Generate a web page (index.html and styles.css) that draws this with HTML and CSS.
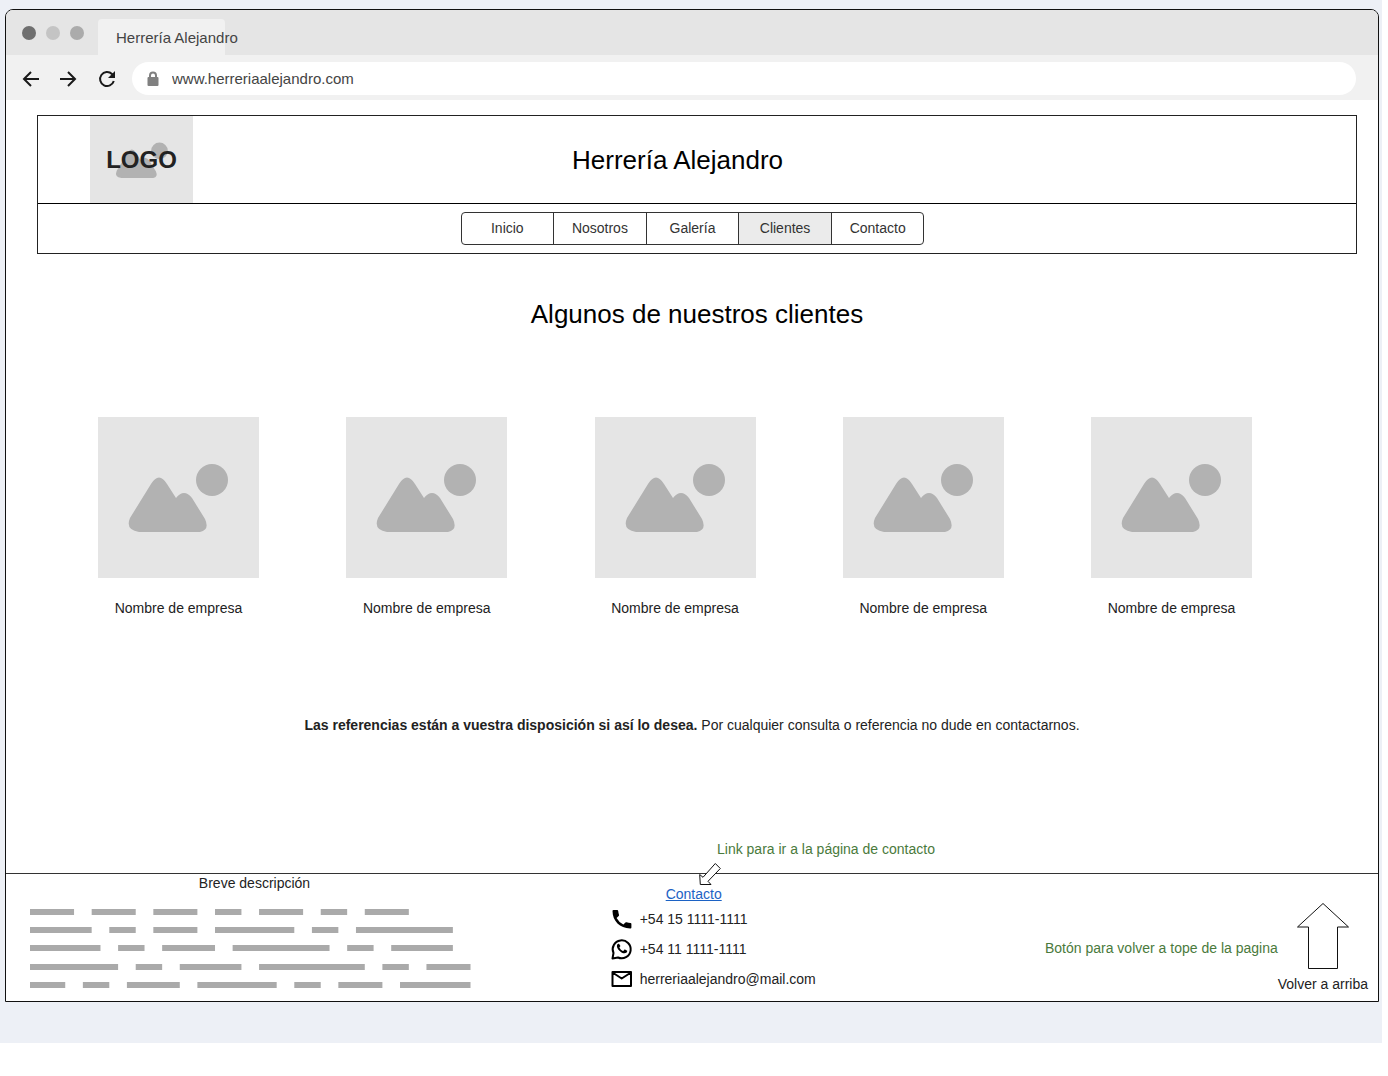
FILE: index.html
```html
<!DOCTYPE html>
<html lang="es">
<head>
  <meta charset="utf-8">
  <meta name="viewport" content="width=device-width, initial-scale=1">
  <title>Herrería Alejandro</title>
  <link rel="stylesheet" href="styles.css">
</head>
<body>
  <svg class="defs" aria-hidden="true">
    <symbol id="placeholder" viewBox="0 0 161 161">
      <path d="M32 101L53 67Q61 54 69 67L78 81Q86 71 94 81L107 102Q112 113 102 115H41Q27 113 32 101Z" />
      <circle cx="114" cy="63" r="16" />
    </symbol>
  </svg>
  <div class="canvas">
    <div class="window">
      <div class="tabs">
        <span class="dot dot-dark"></span>
        <span class="dot dot-light"></span>
        <span class="dot dot-mid"></span>
        <button class="tab" type="button">Herrería Alejandro</button>
      </div>
      <div class="toolbar">
        <button class="tool" type="button" aria-label="Atrás">
          <svg width="18" height="18" viewBox="0 0 18 18"><path d="M17 9H2M9 2L2 9l7 7" /></svg>
        </button>
        <button class="tool" type="button" aria-label="Adelante">
          <svg width="18" height="18" viewBox="0 0 18 18"><path d="M0 9h15M8 2l7 7-7 7" /></svg>
        </button>
        <button class="tool" type="button" aria-label="Recargar">
          <svg width="18" height="18" viewBox="0 0 18 18"><path d="M15.800 11A7 7 0 1 1 14 4l2 2" /><path class="solid" d="M17 1v7h-7z" /></svg>
        </button>
        <div class="address">
          <svg width="12" height="16" viewBox="0 0 12 16"><path class="shackle" d="M3 7V4.500a3 3 0 0 1 6 0V7" /><rect x="0.500" y="6" width="11" height="9" rx="1" /></svg>
          <input type="text" aria-label="Dirección" value="www.herreriaalejandro.com">
        </div>
      </div>

      <header class="site-header">
        <div class="brand">
          <div class="logo">
            <svg width="84" height="84"><use href="#placeholder" /></svg>
            <strong>LOGO</strong>
          </div>
          <h1>Herrería Alejandro</h1>
        </div>
        <nav class="menu">
          <div class="menu-group">
            <a href="#">Inicio</a>
            <a href="#">Nosotros</a>
            <a href="#">Galería</a>
            <a href="#" class="active" aria-current="page">Clientes</a>
            <a href="#">Contacto</a>
          </div>
        </nav>
      </header>

      <main>
        <h2>Algunos de nuestros clientes</h2>
        <div class="clients">
          <figure><svg width="161" height="161"><use href="#placeholder" /></svg><figcaption>Nombre de empresa</figcaption></figure>
          <figure><svg width="161" height="161"><use href="#placeholder" /></svg><figcaption>Nombre de empresa</figcaption></figure>
          <figure><svg width="161" height="161"><use href="#placeholder" /></svg><figcaption>Nombre de empresa</figcaption></figure>
          <figure><svg width="161" height="161"><use href="#placeholder" /></svg><figcaption>Nombre de empresa</figcaption></figure>
          <figure><svg width="161" height="161"><use href="#placeholder" /></svg><figcaption>Nombre de empresa</figcaption></figure>
        </div>
        <p class="references"><strong>Las referencias están a vuestra disposición si así lo desea.</strong> Por cualquier consulta o referencia no dude en contactarnos.</p>
        <p class="note link-note">Link para ir a la página de contacto</p>
      </main>

      <footer>
        <section class="about">
          <p>Breve descripción</p>
          <svg class="lines" width="442" height="80" viewBox="0 0 442 80" aria-hidden="true">
            <g transform="scale(8.810 1)">
              <path d="M0 3h5m2 0h5m2 0h5m2 0h3m2 0h5m2 0h3m2 0h5" />
              <path d="M0 21h7m2 0h3m2 0h5m2 0h9m2 0h3m2 0h11" />
              <path d="M0 39h8m2 0h3m2 0h6m2 0h11m2 0h3m2 0h7" />
              <path d="M0 58h10m2 0h3m2 0h7m2 0h12m2 0h3m2 0h5" />
              <path d="M0 76h4m2 0h3m2 0h6m2 0h9m2 0h3m2 0h5m2 0h8" />
            </g>
          </svg>
        </section>

        <section class="contact">
          <a class="contact-link" href="#">Contacto<svg class="pointer" width="24" height="24" viewBox="0 0 24 24" aria-hidden="true"><path d="M17.300 1.500L22.300 6.500L10 19.300L13 22.500H2.300L1.700 12.500L5 15.300Z" /></svg></a>
          <ul>
            <li>
              <svg width="24" height="24" viewBox="0 0 24 24"><path d="M3.500 3h3.700q.9 0 1 .9.200 2 .8 3.900.2.700-.3 1.200L6.600 11a15.500 15.500 0 0 0 6.800 6.600l2-2q.5-.5 1.200-.3 1.900.5 3.900.7.900.1.900 1V20.500q0 .9-1 .9C10 21.500 2.500 14 2.500 4q0-1 1-1z" /></svg>
              +54 15 1111-1111
            </li>
            <li>
              <svg width="24" height="24" viewBox="0 0 24 24"><path class="outline" d="M2.500 21.500l1-5.500A9 9 0 1 1 8 20.500z" /><path d="M9.300 7.300c-.300-.600-.500-.500-.900-.500-.500 0-1.500.800-1.500 2.100 0 3 4.300 7.400 7.600 7.400 1.500 0 2.600-.900 2.700-2 .1-.500 0-.600-.400-.800l-1.800-.9c-.300-.1-.500-.1-.7.200l-.8 1c-.2.200-.4.200-.7.100a7 7 0 0 1-3.300-3.200c-.1-.2 0-.4.2-.6l.6-.8c.1-.2.1-.3 0-.5z" /></svg>
              +54 11 1111-1111
            </li>
            <li>
              <svg width="24" height="24" viewBox="0 0 24 24"><path class="outline" d="M2.500 5h18.500v14H2.500zM2.500 5.500l9.200 6 9.300-6" /></svg>
              herreriaalejandro@mail.com
            </li>
          </ul>
        </section>

        <section class="top">
          <p class="note">Botón para volver a tope de la pagina</p>
          <button class="to-top" type="button">
            <svg width="54" height="68" viewBox="0 0 54 68" aria-hidden="true"><path d="M27 1.500L52.500 25H41.500V66.500H12.500V25H1.500Z" /></svg>
            Volver a arriba
          </button>
        </section>
      </footer>
    </div>
  </div>
</body>
</html>
```

FILE: styles.css
```css
* {
  box-sizing: border-box;
}

body {
  margin: 0;
  background: #fff;
  color: #222;
  font: 14px/20px "Liberation Sans", Arial, sans-serif;
}

h1, h2, p, figure, ul {
  margin: 0;
  padding: 0;
}

h1, h2 {
  color: #000;
  font-size: 26px;
  font-weight: 400;
  line-height: 32px;
  text-align: center;
}

svg {
  display: block;
  flex: none;
}

button {
  border: 0;
  padding: 0;
  background: none;
  color: inherit;
  font: inherit;
}

.defs {
  position: absolute;
  width: 0;
  height: 0;
}

.canvas {
  margin-right: 6px;
  padding: 9px 3px 41px 5px;
  background: #edf0f6;
}

.window {
  overflow: hidden;
  border: 1px solid #111;
  border-radius: 8px 8px 0 0;
  background: #fff;
}

/* Browser chrome */
.tabs {
  display: flex;
  align-items: center;
  gap: 10px;
  height: 45px;
  padding-left: 16px;
  background: #e5e5e5;
}

.dot {
  width: 14px;
  height: 14px;
  border-radius: 50%;
}

.dot-dark { background: #6f6f6f; }
.dot-light { background: #c4c4c4; }
.dot-mid { background: #ababab; }

.tab {
  align-self: flex-end;
  width: 127px;
  height: 36px;
  margin-left: 4px;
  padding: 2px 0 0 18px;
  border-radius: 4px 4px 0 0;
  background: #f1f1f1;
  color: #444;
  font-size: 15px;
  text-align: left;
  white-space: nowrap;
}

.toolbar {
  display: flex;
  align-items: center;
  gap: 20px;
  height: 45px;
  padding: 2px 22px 0 16px;
  background: #f1f1f1;
}

.tool path {
  fill: none;
  stroke: #1a1a1a;
  stroke-width: 2;
}

.tool .solid {
  fill: #1a1a1a;
  stroke: none;
}

.address {
  display: flex;
  flex: 1;
  align-items: center;
  gap: 13px;
  height: 33px;
  margin-left: -4px;
  padding-left: 15px;
  border-radius: 17px;
  background: #fff;
}

.address svg { fill: #808080; }

.address .shackle {
  fill: none;
  stroke: #808080;
  stroke-width: 2;
}

.address input {
  flex: 1;
  border: 0;
  padding: 0;
  background: none;
  color: #444;
  font: inherit;
  font-size: 15px;
}

/* Site header */
.site-header {
  margin: 15px 21px 0 31px;
  border: 1px solid #222;
}

.brand {
  display: grid;
  grid-template-columns: 103px 1fr 103px;
  align-items: center;
  padding: 0 91px 0 52px;
  border-bottom: 1px solid #000;
}

.logo {
  display: grid;
  height: 87px;
  place-items: center;
  background: #e5e5e5;
}

.logo > * {
  grid-area: 1 / 1;
}

.logo svg {
  fill: #b2b2b2;
}

.logo strong {
  z-index: 1;
  font-size: 24px;
}

.menu {
  padding: 8px 10px 8px 0;
}

.menu-group {
  display: flex;
  width: 463px;
  margin: 0 auto;
}

.menu a {
  flex: 1;
  margin-right: -1px;
  border: 1px solid #333;
  padding: 6px 0;
  color: #333;
  line-height: 19px;
  text-align: center;
  text-decoration: none;
}

.menu a:first-child { border-radius: 4px 0 0 4px; }
.menu a:last-child { border-radius: 0 4px 4px 0; }
.menu .active { background: #ebebeb; }

/* Clients */
main h2 {
  margin-top: 44px;
  padding-left: 10px;
}

.clients {
  display: flex;
  justify-content: space-between;
  margin-top: 87px;
  padding: 0 126px 0 92px;
}

.clients svg {
  background: #e5e5e5;
  fill: #b2b2b2;
}

figcaption {
  margin-top: 20px;
  text-align: center;
}

.references {
  margin-top: 97px;
  text-align: center;
}

.note {
  color: #4a7a3c;
}

.link-note {
  margin: 104px 0 14px calc(50% + 25px);
}

/* Footer */
footer {
  display: grid;
  grid-template-columns: 44% 30% 1fr;
  border-top: 1px solid #333;
}

.about {
  padding-left: 24px;
}

.about p {
  width: 449px;
  line-height: 18px;
  text-align: center;
}

.lines {
  margin-top: 17px;
  fill: none;
  stroke: #aaa;
  stroke-width: 6;
}

.contact {
  padding: 10px 0 7px;
}

.contact-link {
  position: relative;
  display: inline-block;
  margin-left: 56px;
  color: #1c62c4;
}

.pointer {
  position: absolute;
  bottom: 18px;
  left: 32px;
  fill: #fff;
  stroke: #111;
}

.contact ul {
  list-style: none;
}

.contact li {
  display: flex;
  align-items: center;
  gap: 6px;
  height: 30px;
}

.contact li svg {
  fill: #000;
}

.contact .outline {
  fill: none;
  stroke: #000;
  stroke-linejoin: round;
  stroke-width: 2;
}

.top {
  display: flex;
  align-items: center;
  justify-content: flex-end;
  padding-right: 10px;
  white-space: nowrap;
}

.top .note {
  padding-top: 20px;
}

.to-top {
  display: flex;
  flex-direction: column;
  align-items: center;
  gap: 4px;
  padding-top: 20px;
}

.to-top svg {
  fill: #fff;
  stroke: #111;
}
```
